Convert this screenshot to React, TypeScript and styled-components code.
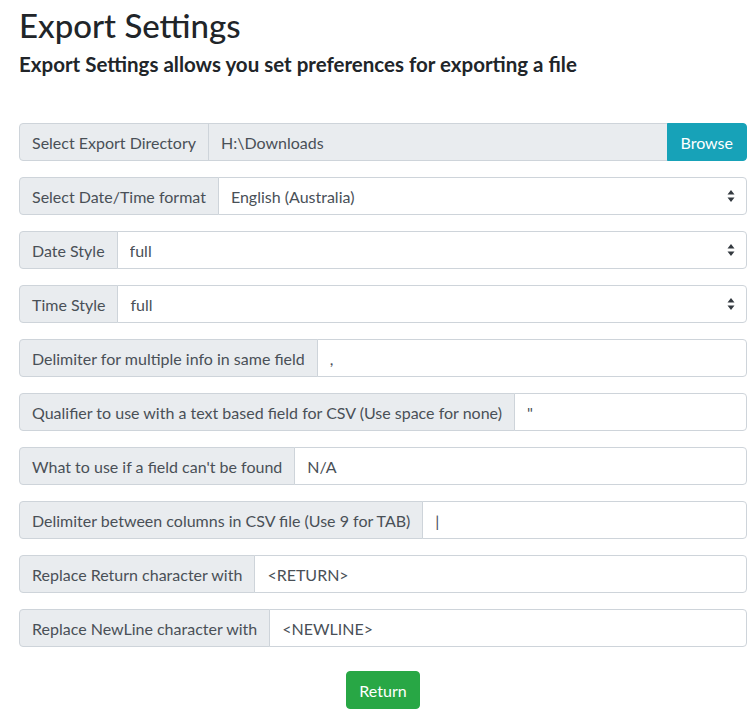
import React, { useState } from 'react'
import styled, { createGlobalStyle } from 'styled-components'

const GlobalStyle = createGlobalStyle`
  body {
    margin: 0;
    background: #fff;
    font-family: Lato, "Liberation Sans", sans-serif;
    color: #212529;
  }
`

const Page = styled.div`
  padding: 6px 6px 10px 19px;
  box-sizing: border-box;
`

const Title = styled.h1`
  margin: 0 0 6px;
  font-size: 33px;
  font-weight: 500;
  line-height: 1.2;
  color: #212529;
`

const SubTitle = styled.h5`
  margin: 0 0 47px;
  font-size: 20.5px;
  font-weight: 700;
  line-height: 1.2;
  color: #212529;
`

const InputGroup = styled.div`
  display: flex;
  align-items: stretch;
  width: 100%;
  height: 38px;
  margin-bottom: 16px;
  position: relative;
`

const Addon = styled.span`
  display: flex;
  align-items: center;
  padding: 0 12px;
  font-size: 16px;
  color: #495057;
  background: #e9ecef;
  border: 1px solid #ced4da;
  border-radius: 4px 0 0 4px;
  white-space: nowrap;
`

const Field = styled.input<{ $readOnly?: boolean; $last?: boolean }>`
  flex: 1;
  min-width: 0;
  margin-left: -1px;
  padding: 0 12px;
  font-family: inherit;
  font-size: 16px;
  color: #495057;
  background: ${p => (p.$readOnly ? '#e9ecef' : '#fff')};
  border: 1px solid #ced4da;
  border-radius: ${p => (p.$last === false ? '0' : '0 4px 4px 0')};
  outline: none;
`

const SelectWrap = styled.div`
  flex: 1;
  position: relative;
  margin-left: -1px;
  display: flex;
`

const Select = styled.select`
  flex: 1;
  appearance: none;
  -webkit-appearance: none;
  padding: 0 28px 0 12px;
  font-family: inherit;
  font-size: 16px;
  color: #495057;
  background: #fff;
  border: 1px solid #ced4da;
  border-radius: 0 4px 4px 0;
  outline: none;
`

const Caret = styled.svg`
  position: absolute;
  right: 12px;
  top: 12px;
  pointer-events: none;
`

const BrowseButton = styled.button`
  margin-left: -1px;
  padding: 0 13px;
  font-family: inherit;
  font-size: 16px;
  color: #fff;
  background: #17a2b8;
  border: 1px solid #17a2b8;
  border-radius: 0 4px 4px 0;
  cursor: pointer;
`

const Footer = styled.div`
  display: flex;
  justify-content: center;
  padding-top: 8px;
`

const ReturnButton = styled.button`
  height: 38px;
  padding: 0 12px;
  font-family: inherit;
  font-size: 16px;
  color: #fff;
  background: #28a745;
  border: 1px solid #28a745;
  border-radius: 4px;
  cursor: pointer;
`

function Arrows() {
  return (
    <Caret width="8" height="14" viewBox="0 0 8 14">
      <path d="M4 1 L7.5 5.5 H0.5 Z M4 13 L7.5 8.5 H0.5 Z" fill="#343a40" />
    </Caret>
  )
}

const textFields = [
  { label: 'Delimiter for multiple info in same field', value: ',' },
  { label: 'Qualifier to use with a text based field for CSV (Use space for none)', value: '"' },
  { label: "What to use if a field can't be found", value: 'N/A' },
  { label: 'Delimiter between columns in CSV file (Use 9 for TAB)', value: '|' },
  { label: 'Replace Return character with', value: '<RETURN>' },
  { label: 'Replace NewLine character with', value: '<NEWLINE>' },
]

export default function App() {
  const [values, setValues] = useState(textFields.map(f => f.value))

  return (
    <Page>
      <GlobalStyle />
      <Title>Export Settings</Title>
      <SubTitle>Export Settings allows you set preferences for exporting a file</SubTitle>

      <InputGroup>
        <Addon>Select Export Directory</Addon>
        <Field $readOnly $last={false} readOnly value="H:\Downloads" />
        <BrowseButton>Browse</BrowseButton>
      </InputGroup>

      <InputGroup>
        <Addon>Select Date/Time format</Addon>
        <SelectWrap>
          <Select defaultValue="en-AU">
            <option value="en-AU">English (Australia)</option>
            <option value="en-US">English (United States)</option>
          </Select>
          <Arrows />
        </SelectWrap>
      </InputGroup>

      <InputGroup>
        <Addon>Date Style</Addon>
        <SelectWrap>
          <Select defaultValue="full">
            <option value="full">full</option>
            <option value="long">long</option>
            <option value="medium">medium</option>
            <option value="short">short</option>
          </Select>
          <Arrows />
        </SelectWrap>
      </InputGroup>

      <InputGroup>
        <Addon>Time Style</Addon>
        <SelectWrap>
          <Select defaultValue="full">
            <option value="full">full</option>
            <option value="long">long</option>
            <option value="medium">medium</option>
            <option value="short">short</option>
          </Select>
          <Arrows />
        </SelectWrap>
      </InputGroup>

      {textFields.map((f, i) => (
        <InputGroup key={f.label}>
          <Addon>{f.label}</Addon>
          <Field
            value={values[i]}
            onChange={e => {
              const next = [...values]
              next[i] = e.target.value
              setValues(next)
            }}
          />
        </InputGroup>
      ))}

      <Footer>
        <ReturnButton>Return</ReturnButton>
      </Footer>
    </Page>
  )
}
